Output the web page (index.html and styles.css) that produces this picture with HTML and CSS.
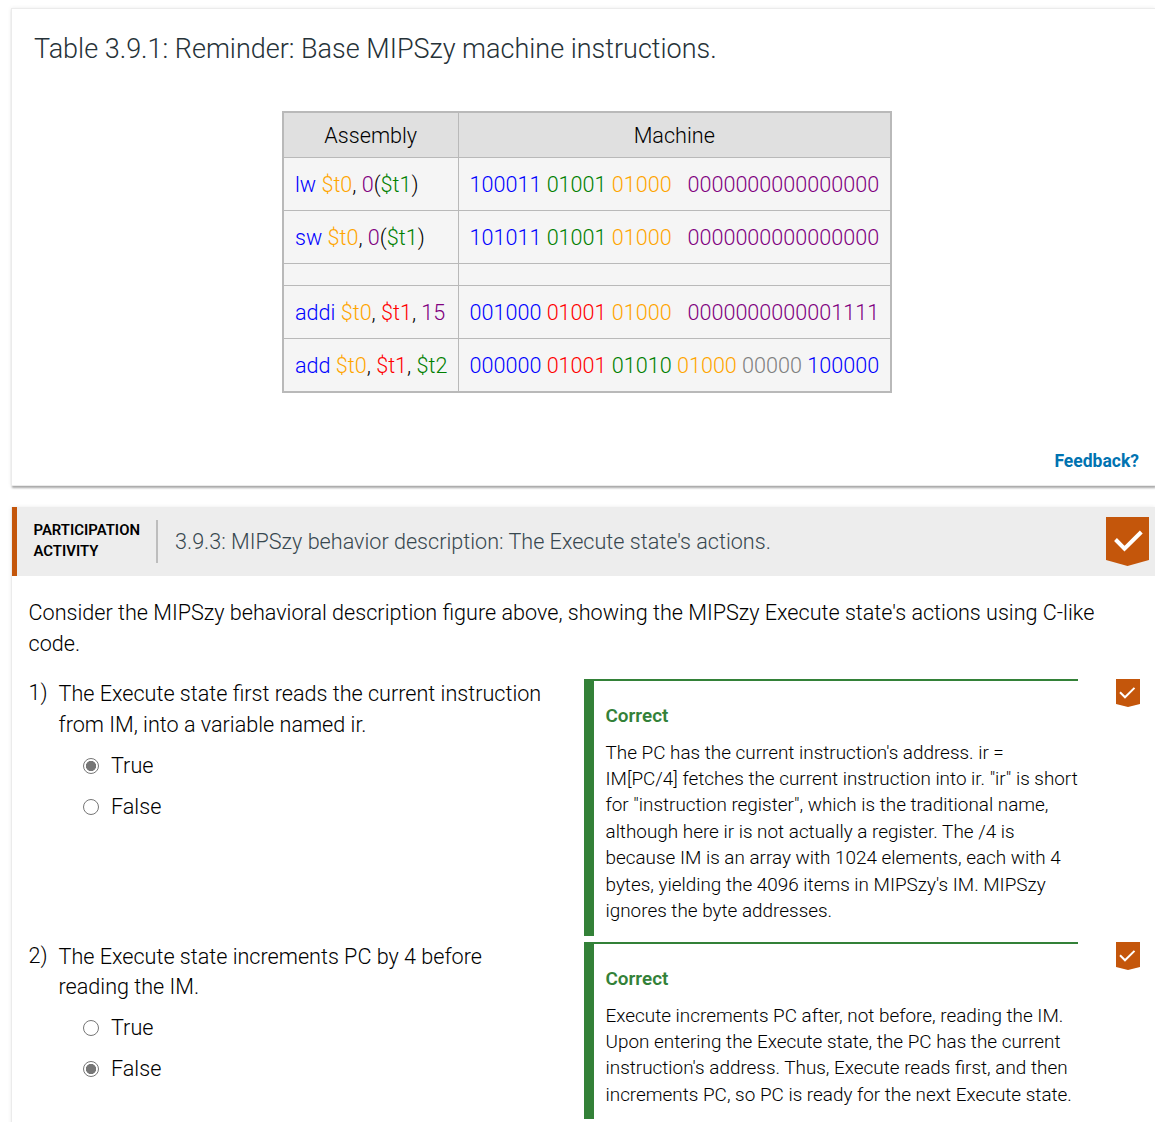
FILE: index.html
```html
<!DOCTYPE html>
<html lang="en">
<head>
<meta charset="utf-8">
<title>MIPSzy</title>
<link rel="stylesheet" href="styles.css">
</head>
<body>
<section class="card">
  <h1 class="card-title">Table 3.9.1: Reminder: Base MIPSzy machine instructions.</h1>
  <table class="instr">
    <colgroup><col class="c1"><col class="c2"></colgroup>
    <tr class="head"><th>Assembly</th><th>Machine</th></tr>
    <tr><td><i class="b">lw</i> <i class="o">$t0</i>, <i class="p">0</i>(<i class="g">$t1</i>)</td><td><i class="b">100011</i> <i class="g">01001</i> <i class="o">01000</i> &nbsp; <i class="p">0000000000000000</i></td></tr>
    <tr><td><i class="b">sw</i> <i class="o">$t0</i>, <i class="p">0</i>(<i class="g">$t1</i>)</td><td><i class="b">101011</i> <i class="g">01001</i> <i class="o">01000</i> &nbsp; <i class="p">0000000000000000</i></td></tr>
    <tr class="gap"><td></td><td></td></tr>
    <tr><td><i class="b">addi</i> <i class="o">$t0</i>, <i class="r">$t1</i>, <i class="p">15</i></td><td><i class="b">001000</i> <i class="r">01001</i> <i class="o">01000</i> &nbsp; <i class="p">0000000000001111</i></td></tr>
    <tr><td><i class="b">add</i> <i class="o">$t0</i>, <i class="r">$t1</i>, <i class="g">$t2</i></td><td><i class="b">000000</i> <i class="r">01001</i> <i class="g">01010</i> <i class="o">01000</i> <i class="y">00000</i> <i class="b">100000</i></td></tr>
  </table>
  <div class="feedback">Feedback?</div>
</section>
<section class="activity">
  <header class="bar">
    <div class="kind">PARTICIPATION<br>ACTIVITY</div>
    <div class="bar-title">3.9.3: MIPSzy behavior description: The Execute state's actions.</div>
    <svg class="badge" viewBox="0 0 43 49"><path d="M0 0H43V43L21.500 49L0 43Z" fill="#c4560b"/><path d="M9.500 22.500L18.500 31.700L35.300 15" fill="none" stroke="#fff" stroke-width="4"/></svg>
  </header>
  <p class="intro">Consider the MIPSzy behavioral description figure above, showing the MIPSzy Execute state's actions using C-like<br>code.</p>
  <div class="question">
    <div class="num">1)</div>
    <div class="prompt">
      <p>The Execute state first reads the current instruction<br>from IM, into a variable named ir.</p>
      <div class="choice"><span class="radio on"></span>True</div>
      <div class="choice"><span class="radio"></span>False</div>
    </div>
    <div class="answer">
      <h2>Correct</h2>
      <p>The PC has the current instruction's address. ir =<br>IM[PC/4] fetches the current instruction into ir. "ir" is short<br>for "instruction register", which is the traditional name,<br>although here ir is not actually a register. The /4 is<br>because IM is an array with 1024 elements, each with 4<br>bytes, yielding the 4096 items in MIPSzy's IM. MIPSzy<br>ignores the byte addresses.</p>
    </div>
    <svg class="small-badge" viewBox="0 0 24 28"><path d="M0 0H24V25L12 28L0 25Z" fill="#c4560b"/><path d="M4 13.300L9 18.300L18.500 8.900" fill="none" stroke="#fff" stroke-width="2"/></svg>
  </div>
  <div class="question second">
    <div class="num">2)</div>
    <div class="prompt">
      <p>The Execute state increments PC by 4 before<br>reading the IM.</p>
      <div class="choice"><span class="radio"></span>True</div>
      <div class="choice"><span class="radio on"></span>False</div>
    </div>
    <div class="answer">
      <h2>Correct</h2>
      <p>Execute increments PC after, not before, reading the IM.<br>Upon entering the Execute state, the PC has the current<br>instruction's address. Thus, Execute reads first, and then<br>increments PC, so PC is ready for the next Execute state.</p>
    </div>
    <svg class="small-badge" viewBox="0 0 24 28"><path d="M0 0H24V25L12 28L0 25Z" fill="#c4560b"/><path d="M4 13.300L9 18.300L18.500 8.900" fill="none" stroke="#fff" stroke-width="2"/></svg>
  </div>
</section>
</body>
</html>
```
FILE: styles.css
```css
* { box-sizing: border-box; }
html { overflow: hidden; }
body { margin: 0; padding: 8px 0 0 11px; height: 1122px; overflow: hidden; background: #fff; color: #000; font-family: Roboto, sans-serif; font-weight: 300; font-size: 21.6px; }
p, h1, h2 { margin: 0; }
.card { height: 478px; border: 1px solid #ebebeb; border-right: 0; box-shadow: 0 0 4px rgba(0,0,0,.08), 1px 2px 2px rgba(0,0,0,.32); display: flex; flex-direction: column; padding: 24px 16px 0 22px; }
.card-title { font-size: 27px; font-weight: 300; line-height: 32px; color: #263238; white-space: nowrap; }
.instr { table-layout: fixed; width: 610px; margin: 46px 0 0 248px; border-collapse: collapse; border: 2px solid #b9b9b9; background: #f5f5f5; }
.c1 { width: 175px; }
.instr th { font-weight: 300; background: #e0e0e0; height: 45px; padding: 1px 0 0; border: 1px solid #b9b9b9; }
.instr td { height: 53px; padding: 1px 0 0 11px; border: 1px solid #b9b9b9; white-space: nowrap; }
.instr .gap td { height: 22px; }
.instr tr:last-child td { height: 54px; }
i { font-style: normal; }
.b { color: #00f; } .o { color: orange; } .g { color: green; } .p { color: purple; } .r { color: red; } .y { color: gray; }
.feedback { margin: 55px 0 0; text-align: right; font-size: 17.5px; line-height: 26px; font-weight: 700; color: #0073b1; }
.activity { margin-top: 21px; border-left: 1px solid #ebebeb; height: 620px; box-shadow: 0 0 4px rgba(0,0,0,.08); }
.bar { display: flex; align-items: center; height: 69px; background: #ededed; border-left: 5px solid #c4560b; padding: 0 6px 0 16.5px; }
.kind { width: 124.5px; height: 43px; border-right: 2px solid #bdbdbd; font-size: 14.9px; font-weight: 600; line-height: 21px; color: #000; }
.bar-title { flex: 1; padding-left: 17px; color: #37474f; white-space: nowrap; }
.badge { width: 43px; height: 49px; }
.intro { margin: 21px 0 0 16.5px; line-height: 31px; white-space: nowrap; }
.question { display: flex; height: 257px; margin: 20px 0 0 16.5px; }
.num { width: 30px; line-height: 28px; }
.prompt { width: 525.5px; line-height: 30.7px; white-space: nowrap; }
.prompt p { margin-bottom: 5px; }
.choice { display: flex; align-items: center; height: 41px; padding-left: 24.5px; }
.radio { width: 16px; height: 16px; margin-right: 12px; border: 1.5px solid #767676; border-radius: 50%; }
.radio.on { background: radial-gradient(circle, #767676 0 4.8px, #fff 5.4px); }
.answer { width: 494px; border-left: 10px solid #338138; border-top: 2px solid #338138; padding: 21.5px 0 0 11.5px; white-space: nowrap; }
.answer h2 { font-size: 18.9px; line-height: 26px; font-weight: 600; color: #338138; }
.answer p { margin-top: 11px; font-size: 18.9px; line-height: 26.46px; }
.small-badge { width: 24px; height: 28px; margin-left: 38px; }
.second { margin-top: 6px; height: 177px; }
.second .prompt { line-height: 30.24px; }
```
